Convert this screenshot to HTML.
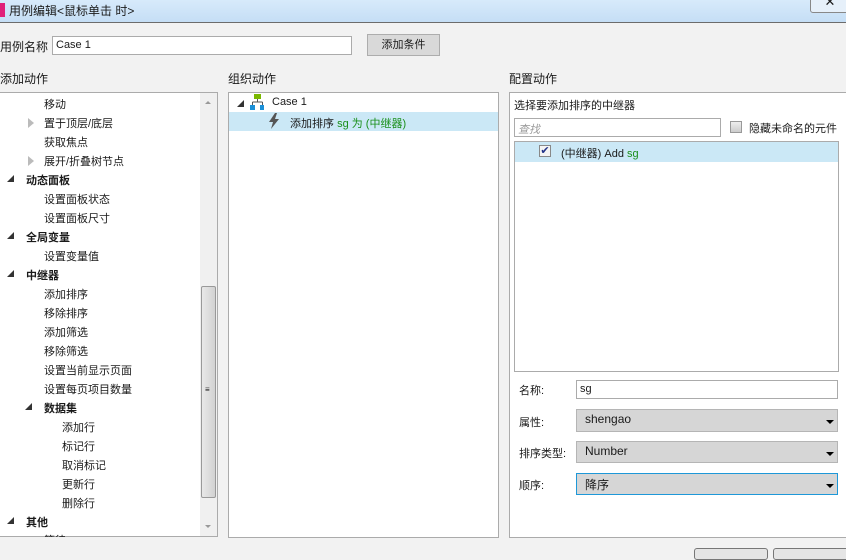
<!DOCTYPE html>
<html><head><meta charset="utf-8"><style>
*{margin:0;padding:0;box-sizing:border-box}
body{width:846px;height:554px;background:#f2f2f2;font-family:"Liberation Sans","Noto Sans CJK SC",sans-serif;font-size:11px;color:#1a1a1a;position:relative;overflow:hidden}
.a{position:absolute;white-space:nowrap}
.box{position:absolute;background:#fff;border:1px solid #ababab}
.g{color:#1a8f1a}
.tri{position:absolute;width:0;height:0;border-left:7px solid transparent;border-bottom:7px solid #333}
.tro{position:absolute;width:0;height:0;border-top:5px solid transparent;border-bottom:5px solid transparent;border-left:6px solid #bbb}
.sel{position:absolute;background:#d6d6d6;border:1px solid #b5b5b5;font-size:12px;padding:2px 8px}
.arr{position:absolute;right:3px;top:10px;width:0;height:0;border-left:4px solid transparent;border-right:4px solid transparent;border-top:4px solid #000}
b{font-weight:bold}
</style></head><body>
<div class="a" style="left:0;top:0;width:846px;height:23px;background:linear-gradient(#d7eafb,#c5def5);border-bottom:1px solid #6c6c6c"></div>
<div class="a" style="left:0;top:3px;width:5px;height:14px;background:#e0207a"></div>
<div class="a" style="left:9px;top:2px;font-size:12px">用例编辑&lt;鼠标单击 时&gt;</div>
<div class="a" style="left:810px;top:-6px;width:40px;height:19px;border:1px solid #888;border-radius:3px;background:#e6f0fa;text-align:center;font-size:13px;line-height:14px">✕</div>

<div class="a" style="left:0;top:38px;font-size:12px">用例名称</div>
<div class="box" style="left:52px;top:36px;width:300px;height:19px;padding:2px 3px;font-size:11px">Case 1</div>
<div class="a" style="left:367px;top:34px;width:73px;height:22px;background:#d9d9d9;border:1px solid #adadad;text-align:center;line-height:20px;font-size:11px">添加条件</div>

<div class="a" style="left:0;top:70px;font-size:12px">添加动作</div>
<div class="a" style="left:228px;top:70px;font-size:12px">组织动作</div>
<div class="a" style="left:509px;top:70px;font-size:12px">配置动作</div>

<div class="box" style="left:-1px;top:92px;width:219px;height:445px;overflow:hidden">
<div class="a" style="left:200px;top:0;width:17px;height:443px;background:#f0f0f0"></div>
<div class="a" style="left:205px;top:8px;width:0;height:0;border-left:3px solid transparent;border-right:3px solid transparent;border-bottom:3px solid #999"></div>
<div class="a" style="left:205px;top:432px;width:0;height:0;border-left:3px solid transparent;border-right:3px solid transparent;border-top:3px solid #999"></div>
<div class="a" style="left:201px;top:193px;width:15px;height:212px;background:linear-gradient(90deg,#e8e8e8,#d2d2d2);border:1px solid #999;border-radius:2px"></div>
<div class="a" style="left:205px;top:295px;font-size:8px;line-height:3px">≡</div>
</div>
<div id="tree">
<div class="a" style="left:44px;top:96px">移动</div>
<div class="tro" style="left:28px;top:118px"></div><div class="a" style="left:44px;top:115px">置于顶层/底层</div>
<div class="a" style="left:44px;top:134px">获取焦点</div>
<div class="tro" style="left:28px;top:156px"></div><div class="a" style="left:44px;top:153px">展开/折叠树节点</div>
<div class="tri" style="left:7px;top:175px"></div><div class="a" style="left:26px;top:172px"><b>动态面板</b></div>
<div class="a" style="left:44px;top:191px">设置面板状态</div>
<div class="a" style="left:44px;top:210px">设置面板尺寸</div>
<div class="tri" style="left:7px;top:232px"></div><div class="a" style="left:26px;top:229px"><b>全局变量</b></div>
<div class="a" style="left:44px;top:248px">设置变量值</div>
<div class="tri" style="left:7px;top:270px"></div><div class="a" style="left:26px;top:267px"><b>中继器</b></div>
<div class="a" style="left:44px;top:286px">添加排序</div>
<div class="a" style="left:44px;top:305px">移除排序</div>
<div class="a" style="left:44px;top:324px">添加筛选</div>
<div class="a" style="left:44px;top:343px">移除筛选</div>
<div class="a" style="left:44px;top:362px">设置当前显示页面</div>
<div class="a" style="left:44px;top:381px">设置每页项目数量</div>
<div class="tri" style="left:25px;top:403px"></div><div class="a" style="left:44px;top:400px"><b>数据集</b></div>
<div class="a" style="left:62px;top:419px">添加行</div>
<div class="a" style="left:62px;top:438px">标记行</div>
<div class="a" style="left:62px;top:457px">取消标记</div>
<div class="a" style="left:62px;top:476px">更新行</div>
<div class="a" style="left:62px;top:495px">删除行</div>
<div class="tri" style="left:7px;top:517px"></div><div class="a" style="left:26px;top:514px"><b>其他</b></div>
<div class="a" style="left:44px;top:532px;height:5px;overflow:hidden">等待</div>
</div>

<div class="box" style="left:228px;top:92px;width:271px;height:446px">
<div class="a" style="left:0;top:19px;width:269px;height:19px;background:#cbe8f6"></div>
</div>
<div class="tri" style="left:237px;top:100px"></div>
<svg class="a" style="left:250px;top:94px" width="14" height="16"><rect x="4" y="0" width="7" height="5" fill="#7ab800"/><path d="M7.5 5V8M2.5 8H12.5M2.5 8V11M12.5 8V11" stroke="#555" fill="none"/><rect x="0" y="11" width="5" height="5" fill="#1b90d8"/><rect x="10" y="11" width="5" height="5" fill="#1b90d8"/></svg>
<div class="a" style="left:272px;top:96px">Case 1</div>
<svg class="a" style="left:268px;top:113px" width="12" height="16"><path d="M7 0L1 9H5L3 16L11 6H7L9 0Z" fill="#555"/></svg>
<div class="a" style="left:290px;top:115px">添加排序 <span class="g">sg 为 (中继器)</span></div>

<div class="box" style="left:509px;top:92px;width:340px;height:446px"></div>
<div class="a" style="left:514px;top:97px">选择要添加排序的中继器</div>
<div class="box" style="left:514px;top:118px;width:207px;height:19px;padding:2px 3px;color:#999;font-style:italic">查找</div>
<div class="a" style="left:730px;top:121px;width:12px;height:12px;border:1px solid #999;background:linear-gradient(#eee,#ccc)"></div>
<div class="a" style="left:749px;top:120px">隐藏未命名的元件</div>
<div class="box" style="left:514px;top:141px;width:325px;height:231px">
<div class="a" style="left:0;top:0;width:323px;height:20px;background:#cbe8f6"></div>
</div>
<div class="a" style="left:539px;top:145px;width:12px;height:12px;border:1px solid #888;background:#f4f4f4;color:#223388;font-size:11px;line-height:10px;text-align:center">✔</div>
<div class="a" style="left:561px;top:145px">(中继器) Add <span class="g">sg</span></div>

<div class="a" style="left:519px;top:382px">名称:</div>
<div class="box" style="left:576px;top:380px;width:262px;height:19px;padding:2px 3px">sg</div>
<div class="a" style="left:519px;top:414px">属性:</div>
<div class="sel" style="left:576px;top:409px;width:262px;height:23px">shengao<div class="arr"></div></div>
<div class="a" style="left:519px;top:445px">排序类型:</div>
<div class="sel" style="left:576px;top:441px;width:262px;height:22px">Number<div class="arr"></div></div>
<div class="a" style="left:519px;top:477px">顺序:</div>
<div class="sel" style="left:576px;top:473px;width:262px;height:22px;border-color:#1e98d8">降序<div class="arr"></div></div>

<div class="a" style="left:694px;top:548px;width:74px;height:12px;border:1px solid #777;border-radius:3px;background:#e5e5e5"></div>
<div class="a" style="left:773px;top:548px;width:80px;height:12px;border:1px solid #777;border-radius:3px;background:#e5e5e5"></div>
</body></html>
